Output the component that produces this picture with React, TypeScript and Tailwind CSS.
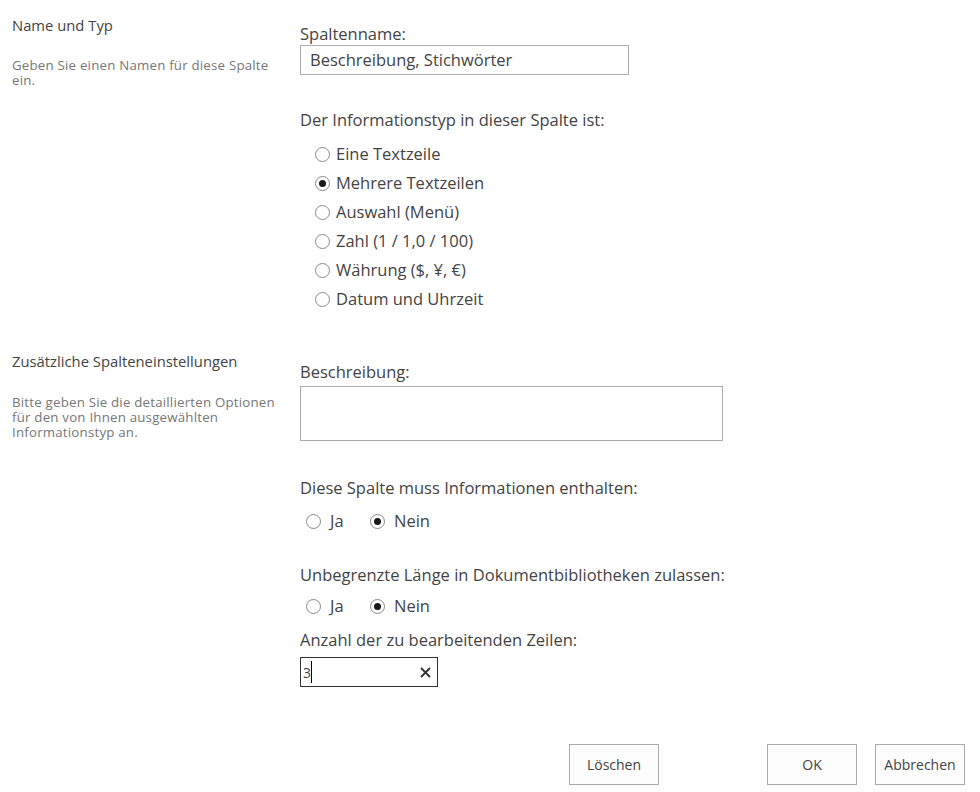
import React from "react";

const font = { fontFamily: '"Open Sans", "Noto Sans", sans-serif' };

const Radio = ({ checked = false }: { checked?: boolean }) => (
  <span className="inline-flex h-[15px] w-[15px] shrink-0 items-center justify-center rounded-full border border-[#8a8a8a] bg-white">
    {checked && <span className="h-[7px] w-[7px] rounded-full bg-[#1a1a1a]" />}
  </span>
);

const typeOptions = [
  { label: "Eine Textzeile", checked: false },
  { label: "Mehrere Textzeilen", checked: true },
  { label: "Auswahl (Menü)", checked: false },
  { label: "Zahl (1 / 1,0 / 100)", checked: false },
  { label: "Währung ($, ¥, €)", checked: false },
  { label: "Datum und Uhrzeit", checked: false },
];

const YesNo = () => (
  <div className="flex h-[29px] items-center pl-[6px] text-[16.5px] text-[#444]">
    <Radio />
    <span className="ml-[9px] w-[40px]">Ja</span>
    <Radio checked />
    <span className="ml-[9px]">Nein</span>
  </div>
);

const Button = ({ children }: { children: React.ReactNode }) => (
  <button className="h-[41px] w-[90px] border border-[#ababab] bg-[#fdfdfd] text-[14px] text-[#444]">
    {children}
  </button>
);

export default function App() {
  return (
    <div className="h-[792px] w-[980px] overflow-hidden bg-white" style={font}>
      {/* Name und Typ */}
      <div className="flex">
        <div className="w-[300px] pl-3 pt-[15px]">
          <div className="text-[14.8px] leading-[20px] text-[#444]">Name und Typ</div>
          <p className="mt-[23px] whitespace-nowrap text-[13.3px] leading-[15px] tracking-[0.2px] text-[#777]">
            Geben Sie einen Namen für diese Spalte
            <br />
            ein.
          </p>
        </div>
        <div className="flex-1 pt-[24px]">
          <div className="text-[16.5px] leading-[20px] text-[#444]">Spaltenname:</div>
          <div className="mt-px flex h-[30px] w-[329px] items-center border border-[#ababab] px-[9px] text-[16.5px] text-[#444]">
            Beschreibung, Stichwörter
          </div>
          <div className="mt-[35px] text-[16.5px] leading-[20px] text-[#444]">
            Der Informationstyp in dieser Spalte ist:
          </div>
          <div className="mt-[10px] pl-[15px]">
            {typeOptions.map((o) => (
              <div key={o.label} className="flex h-[29px] items-center gap-[6px] text-[16.5px] text-[#444]">
                <Radio checked={o.checked} />
                <span>{o.label}</span>
              </div>
            ))}
          </div>
        </div>
      </div>

      {/* Zusätzliche Spalteneinstellungen */}
      <div className="flex">
        <div className="w-[300px] pl-3 pt-[37px]">
          <div className="text-[14.8px] leading-[20px] text-[#444]">Zusätzliche Spalteneinstellungen</div>
          <p className="mt-[24px] whitespace-nowrap text-[13.3px] leading-[15px] tracking-[0.2px] text-[#777]">
            Bitte geben Sie die detaillierten Optionen
            <br />
            für den von Ihnen ausgewählten
            <br />
            Informationstyp an.
          </p>
        </div>
        <div className="flex-1 pt-[48px]">
          <div className="text-[16.5px] leading-[20px] text-[#444]">Beschreibung:</div>
          <div className="mt-[4px] h-[55px] w-[423px] border border-[#ababab]" />

          <div className="mt-[37px] text-[16.5px] leading-[20px] text-[#444]">
            Diese Spalte muss Informationen enthalten:
          </div>
          <div className="mt-[9px]">
            <YesNo />
          </div>

          <div className="mt-[29px] text-[16.5px] leading-[20px] text-[#444]">
            Unbegrenzte Länge in Dokumentbibliotheken zulassen:
          </div>
          <div className="mt-[7px]">
            <YesNo />
          </div>

          <div className="mt-[9px] text-[16.5px] leading-[20px] text-[#444]">
            Anzahl der zu bearbeitenden Zeilen:
          </div>
          <div className="mt-[7px] flex h-[30px] w-[138px] items-center border border-[#333] pl-[2px] pr-[6px] text-[14px] text-[#444]">
            <span>3</span>
            <span className="h-[22px] w-px bg-black" />
            <svg className="ml-auto" width="11" height="11" viewBox="0 0 11 11">
              <path d="M1 1 L10 10 M10 1 L1 10" stroke="#333" strokeWidth="1.8" />
            </svg>
          </div>

          <div className="mt-[57px] flex pl-[269px]">
            <Button>Löschen</Button>
            <div className="ml-[108px] flex gap-[18px]">
              <Button>OK</Button>
              <Button>Abbrechen</Button>
            </div>
          </div>
        </div>
      </div>
    </div>
  );
}
